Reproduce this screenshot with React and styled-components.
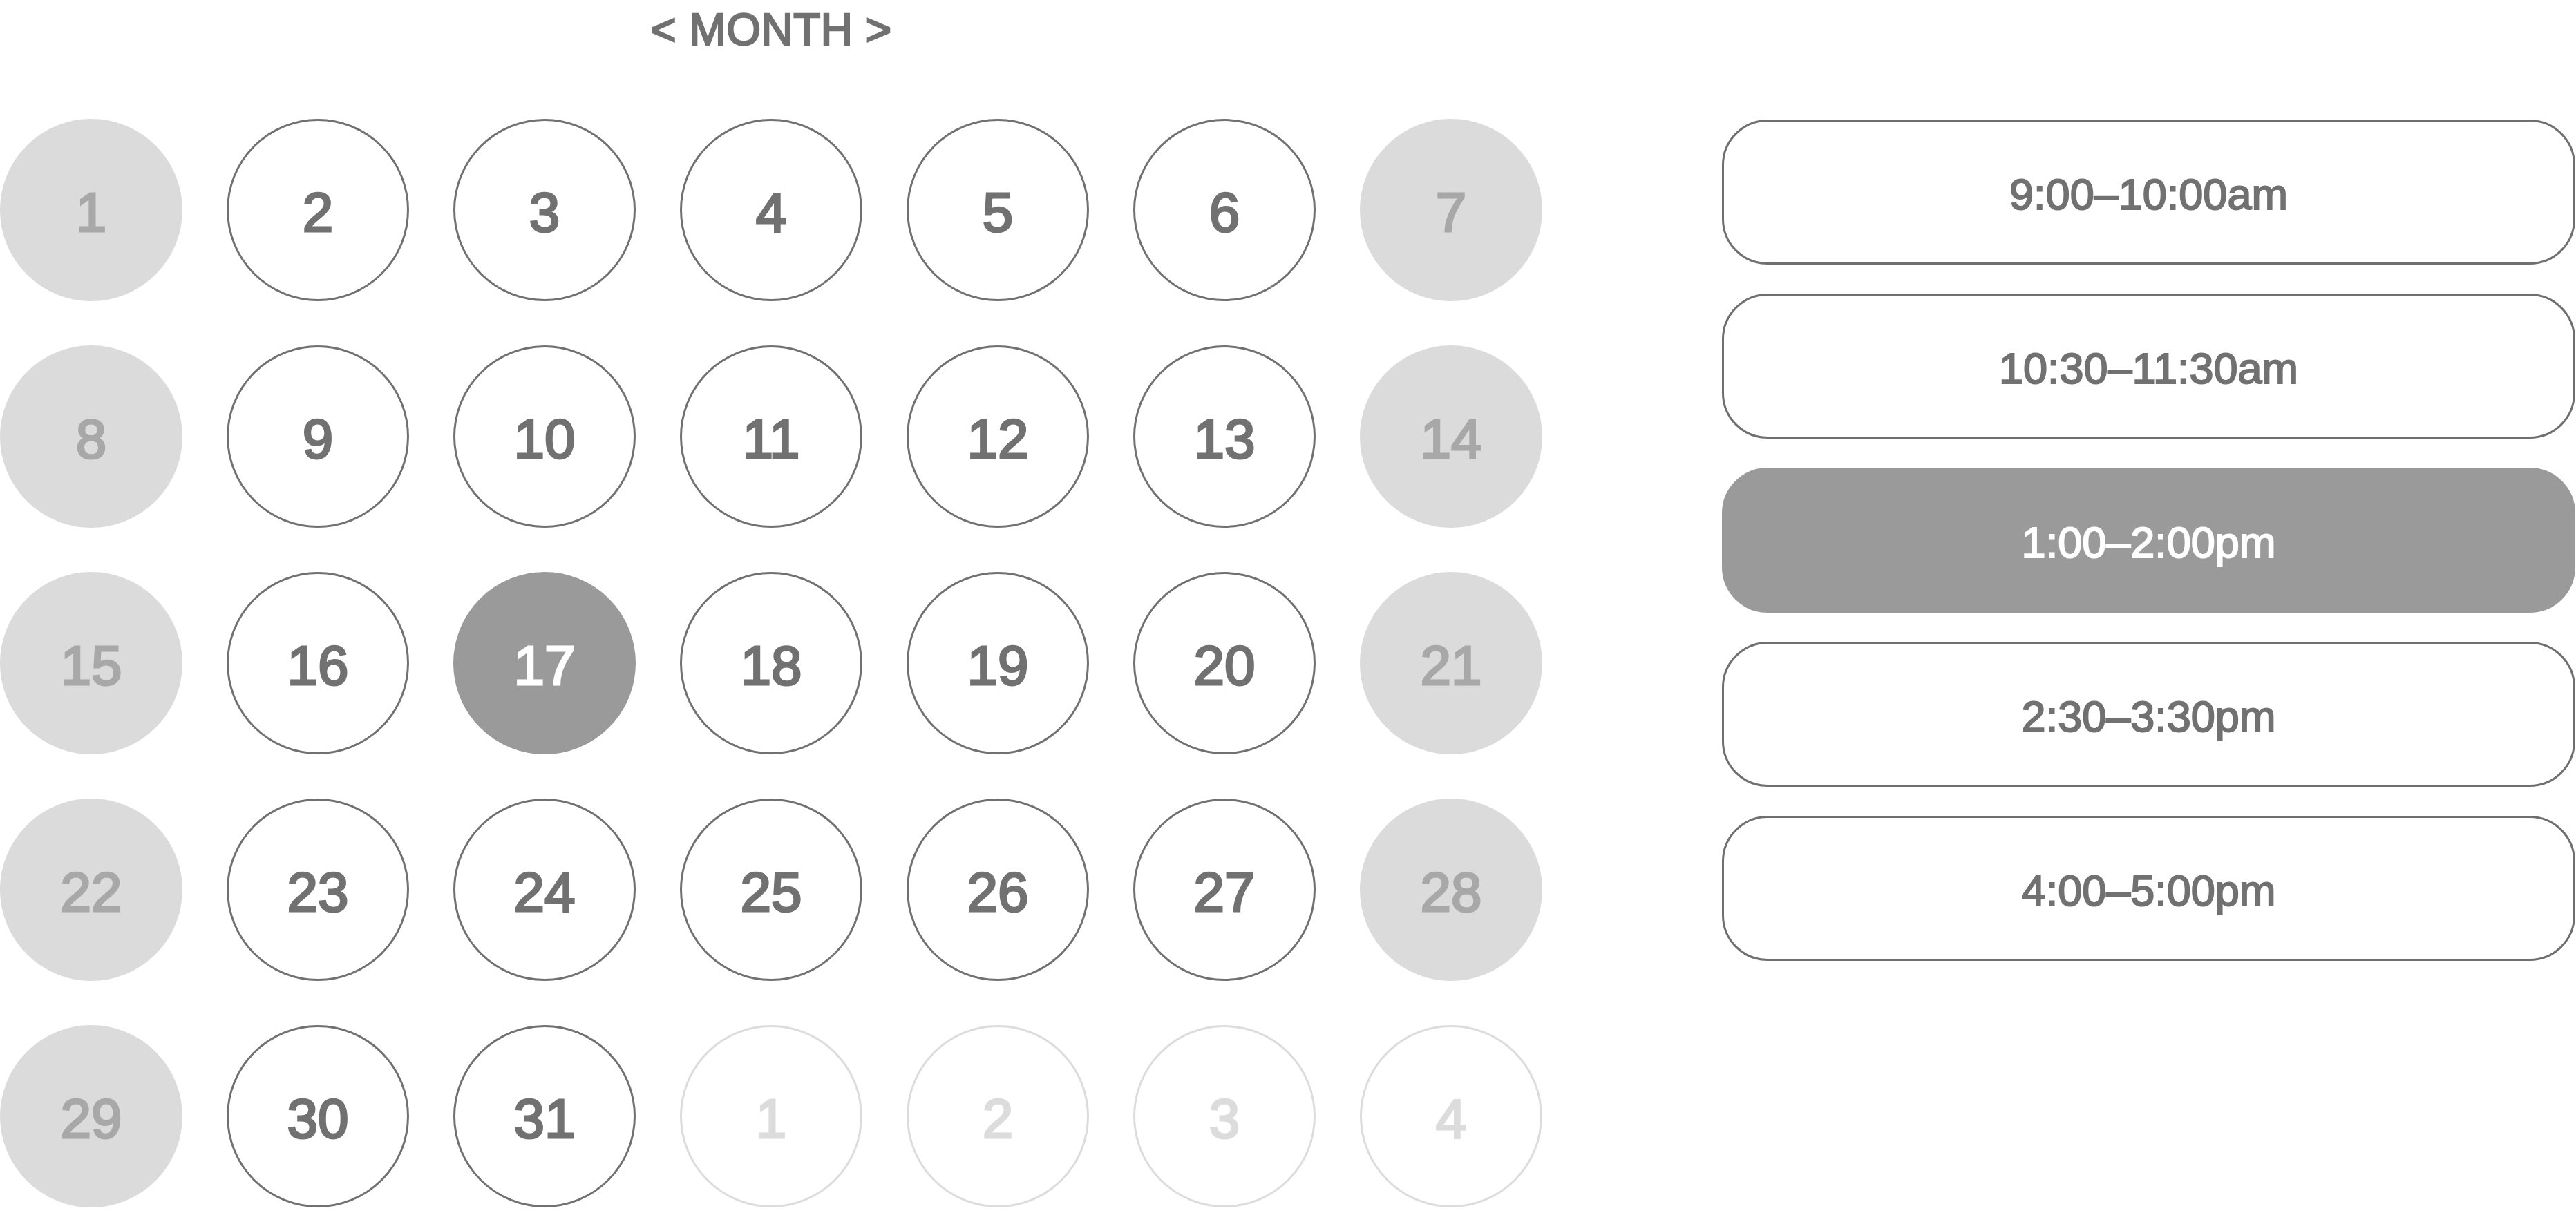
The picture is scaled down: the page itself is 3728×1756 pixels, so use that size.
import React, { useState } from 'react';
import styled, { createGlobalStyle } from 'styled-components';

const GlobalStyle = createGlobalStyle`
  html, body {
    margin: 0;
    padding: 0;
    background: #ffffff;
  }

  body {
    font-family: "Liberation Sans", Arial, Helvetica, sans-serif;
  }
`;

const weekendDays = [0, 6];

const buildDays = () => {
  const days = [];
  for (let d = 1; d <= 31; d++) {
    days.push({ label: d, outside: false, weekend: weekendDays.includes((d - 1) % 7) });
  }
  for (let d = 1; d <= 4; d++) {
    days.push({ label: d, outside: true, weekend: false });
  }
  return days;
};

const slots = ['9:00–10:00am', '10:30–11:30am', '1:00–2:00pm', '2:30–3:30pm', '4:00–5:00pm'];

const App = () => {
  const [selectedDay, setSelectedDay] = useState(17);
  const [selectedSlot, setSelectedSlot] = useState(2);
  const days = buildDays();

  const variantFor = (day) => {
    if (day.outside) return 'outside';
    if (day.label === selectedDay) return 'selected';
    if (day.weekend) return 'weekend';
    return 'normal';
  };

  return (
    <>
      <GlobalStyle />
      <Page>
        <Calendar>
          <MonthBar>&lt; MONTH &gt;</MonthBar>
          <DayGrid>
            {days.map((day, i) => (
              <Day
                key={i}
                $variant={variantFor(day)}
                onClick={() => !day.outside && !day.weekend && setSelectedDay(day.label)}
              >
                {day.label}
              </Day>
            ))}
          </DayGrid>
        </Calendar>
        <SlotList>
          {slots.map((slot, i) => (
            <Slot key={slot} $active={i === selectedSlot} onClick={() => setSelectedSlot(i)}>
              {slot}
            </Slot>
          ))}
        </SlotList>
      </Page>
    </>
  );
};

const Page = styled.div`
  display: flex;
  align-items: flex-start;
  width: 3728px;
`;

const Calendar = styled.div`
  display: flex;
  flex-direction: column;
  width: 2232px;
`;

const MonthBar = styled.div`
  height: 86px;
  line-height: 86px;
  font-size: 64px;
  color: #717171;
  -webkit-text-stroke: 2.5px #717171;
  text-align: center;
  letter-spacing: 0.5px;
`;

const DayGrid = styled.div`
  margin-top: 86px;
  display: grid;
  grid-template-columns: repeat(7, 264px);
  grid-auto-rows: 264px;
  gap: 64px;
`;

const dayColors = {
  normal: { bg: '#ffffff', border: '#717171', text: '#717171' },
  weekend: { bg: '#dbdbdb', border: '#dbdbdb', text: '#a8a8a8' },
  selected: { bg: '#9a9a9a', border: '#9a9a9a', text: '#ffffff' },
  outside: { bg: '#ffffff', border: '#dcdcdc', text: '#dcdcdc' },
};

const Day = styled.div`
  box-sizing: border-box;
  width: 264px;
  height: 264px;
  border-radius: 50%;
  border: 3px solid ${(p) => dayColors[p.$variant].border};
  background: ${(p) => dayColors[p.$variant].bg};
  color: ${(p) => dayColors[p.$variant].text};
  -webkit-text-stroke: 3px ${(p) => dayColors[p.$variant].text};
  display: flex;
  align-items: center;
  justify-content: center;
  padding-top: 8px;
  font-size: 80px;
  line-height: 1;
  cursor: pointer;
`;

const SlotList = styled.div`
  margin-top: 173px;
  margin-left: 260px;
  width: 1235px;
  display: flex;
  flex-direction: column;
  gap: 42px;
`;

const Slot = styled.div`
  box-sizing: border-box;
  height: 210px;
  border-radius: 66px;
  border: 3px solid ${(p) => (p.$active ? '#9a9a9a' : '#6f6f6f')};
  background: ${(p) => (p.$active ? '#9a9a9a' : '#ffffff')};
  color: ${(p) => (p.$active ? '#ffffff' : '#717171')};
  -webkit-text-stroke: 2px ${(p) => (p.$active ? '#ffffff' : '#717171')};
  display: flex;
  align-items: center;
  justify-content: center;
  padding-top: 6px;
  font-size: 63px;
  line-height: 1;
  cursor: pointer;
`;

export default App;
